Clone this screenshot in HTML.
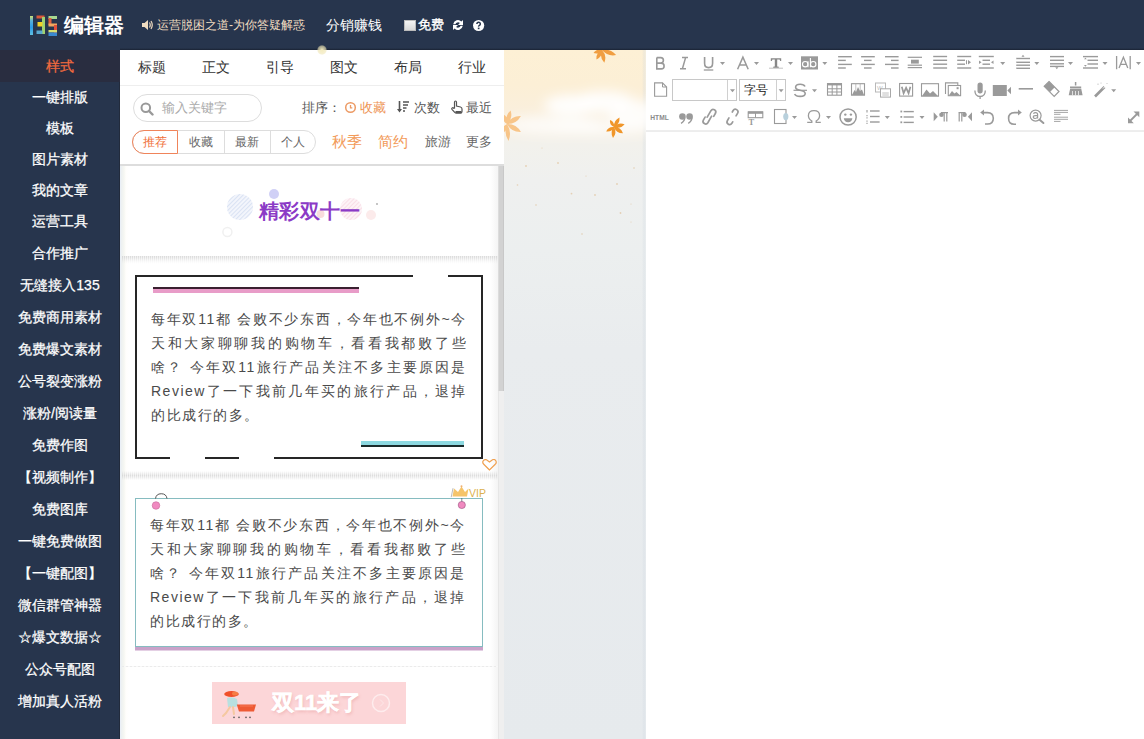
<!DOCTYPE html>
<html><head><meta charset="utf-8">
<style>
*{box-sizing:border-box;margin:0;padding:0}
html,body{width:1144px;height:739px;overflow:hidden;background:#fff;font-family:"Liberation Sans",sans-serif}
.abs{position:absolute}
#hdr{position:absolute;left:0;top:0;width:1144px;height:50px;background:#27354d}
#side{position:absolute;left:0;top:50px;width:120px;height:689px;background:#27354d}
#side div{position:absolute;left:0;width:120px;height:32px;line-height:32px;text-align:center;color:#fff;font-size:14px;white-space:nowrap;-webkit-text-stroke:.25px currentColor}
#side div.on{color:#f26b3e;background:#292d40}
#mid{position:absolute;left:120px;top:50px;width:384px;height:689px;background:#fff;overflow:hidden}
#bg{position:absolute;left:504px;top:50px;width:142px;height:689px;background:linear-gradient(#fdf0d5 0px,#fcefd6 35px,#faefdc 60px,#f7f1e6 80px,#f2f1ec 95px,#eff0ef 130px,#ecefef 200px,#e9ecee 300px,#e6eaed 689px);overflow:hidden}
#ed{position:absolute;left:646px;top:50px;width:498px;height:689px;background:#fff}
.tab{position:absolute;top:0;height:35px;line-height:35px;width:64px;text-align:center;font-size:14px;color:#333}
.t13{font-size:13px}
.sep{position:absolute;left:2px;width:376px;height:8px;background:repeating-linear-gradient(90deg,#d0d0d0 0 1px,#ececec 1px 2px);-webkit-mask:linear-gradient(rgba(0,0,0,.8) 0,rgba(0,0,0,.6) 2px,rgba(0,0,0,.3) 4px,rgba(0,0,0,.1) 6px,rgba(0,0,0,0) 8px)}
.sep2{position:absolute;left:2px;width:376px;height:1px;background:repeating-linear-gradient(90deg,#ebebeb 0 2px,#f8f8f8 2px 4px)}
.txt{position:absolute;left:151px;width:316px;font-size:14px;letter-spacing:1.5px;color:#4a4a4a;line-height:24px}
.txt div{text-align:justify;text-align-last:justify;height:24px;white-space:nowrap}
.txt div.l{text-align-last:left}
</style></head><body>
<div id="hdr">
<svg class="abs" style="left:0;top:0" width="62" height="40" viewBox="0 0 62 40">
<defs><linearGradient id="g1" x1="0" y1="0" x2="0" y2="1"><stop offset="0" stop-color="#cfe070"/><stop offset=".25" stop-color="#58b0d8"/><stop offset=".6" stop-color="#2a9ae8"/><stop offset="1" stop-color="#60c0e0"/></linearGradient></defs>
<rect x="30" y="16" width="3" height="19" fill="url(#g1)"/>
<rect x="36.5" y="15.5" width="8" height="3" fill="#d8583a"/>
<rect x="42" y="17" width="3" height="17" fill="#a0d070"/>
<rect x="37.5" y="22" width="5" height="4.5" fill="#f0d028"/>
<rect x="36.5" y="30.5" width="6" height="3.5" fill="#5aa8d0"/>
<rect x="48.5" y="16" width="8.5" height="3" fill="#a8d890"/>
<rect x="48.5" y="18" width="3" height="7" fill="#e0603e"/>
<rect x="48.5" y="23.5" width="8.5" height="3" fill="#f0a860"/>
<rect x="54" y="25" width="3" height="8" fill="#e0503c"/>
<rect x="48.5" y="30" width="8.5" height="2.5" fill="#d8e070"/>
<rect x="48.5" y="32.5" width="8.5" height="3.5" fill="#3a88d0"/>
</svg>
<div class="abs" style="left:64px;top:12px;font-size:20px;font-weight:bold;color:#fff;line-height:26px">编辑器</div>
<svg class="abs" style="left:142px;top:19px" width="12" height="12" viewBox="0 0 12 12"><path d="M0 4h2.5l3.5-3v10l-3.5-3h-2.5z" fill="#f0dcc0"/><path d="M7.5 3.5q1.5 2.5 0 5M9 2q2.5 4 0 8" stroke="#f0dcc0" stroke-width="1.2" fill="none"/></svg>
<div class="abs" style="left:157px;top:16px;font-size:12px;color:#f0dcc0;line-height:18px;white-space:nowrap">运营脱困之道-为你答疑解惑</div>
<div class="abs" style="left:326px;top:15px;font-size:14px;color:#fff;line-height:20px;white-space:nowrap">分销赚钱</div>
<div class="abs" style="left:404px;top:20px;width:12px;height:11px;background:linear-gradient(#f4f4f4,#d8d8d8);border:1px solid #bbb"></div>
<div class="abs" style="left:418px;top:16px;font-size:12.5px;color:#fff;line-height:18px;white-space:nowrap;-webkit-text-stroke:.35px #fff">免费</div>
<svg class="abs" style="left:452px;top:19px" width="12" height="12" viewBox="0 0 12 12"><path d="M1.2 5.2A4.8 4.8 0 0 1 9.4 2.6L11 1V6H6L7.9 4.1A2.8 2.8 0 0 0 3.4 5.2z" fill="#fff"/><path d="M10.8 6.8A4.8 4.8 0 0 1 2.6 9.4L1 11V6H6L4.1 7.9A2.8 2.8 0 0 0 8.6 6.8z" fill="#fff"/></svg>
<svg class="abs" style="left:472px;top:19px" width="13" height="13" viewBox="0 0 13 13"><circle cx="6.6" cy="6.5" r="5.6" fill="#fff"/><path d="M4.9 5.1q0-1.8 1.7-1.8t1.7 1.6q0 .9-.9 1.4t-.8 1.3" stroke="#27354d" stroke-width="1.5" fill="none"/><rect x="5.8" y="8.6" width="1.7" height="1.6" fill="#27354d"/></svg>
</div>
<div id="side"><div style="left:119px;top:0;width:1px;height:689px;background:#222b3c"></div>
<div class="on" style="top:0">样式</div>
<div style="top:31px">一键排版</div>
<div style="top:62px">模板</div>
<div style="top:93px">图片素材</div>
<div style="top:124px">我的文章</div>
<div style="top:155px">运营工具</div>
<div style="top:187px">合作推广</div>
<div style="top:219px">无缝接入135</div>
<div style="top:251px">免费商用素材</div>
<div style="top:283px">免费爆文素材</div>
<div style="top:315px">公号裂变涨粉</div>
<div style="top:347px">涨粉/阅读量</div>
<div style="top:379px">免费作图</div>
<div style="top:411px">【视频制作】</div>
<div style="top:443px">免费图库</div>
<div style="top:475px">一键免费做图</div>
<div style="top:507px">【一键配图】</div>
<div style="top:539px">微信群管神器</div>
<div style="top:571px">☆爆文数据☆</div>
<div style="top:603px">公众号配图</div>
<div style="top:635px">增加真人活粉</div>
</div>
<div id="mid">
<div class="tab" style="left:0">标题</div>
<div class="tab" style="left:64px">正文</div>
<div class="tab" style="left:128px">引导</div>
<div class="tab" style="left:192px">图文</div>
<div class="tab" style="left:256px">布局</div>
<div class="tab" style="left:320px">行业</div>
<div class="abs" style="left:0;top:35px;width:384px;height:1px;background:#eee"></div>
<div class="abs" style="left:13px;top:44px;width:129px;height:28px;border:1px solid #ddd;border-radius:14px"></div>
<svg class="abs" style="left:20px;top:52px" width="14" height="14" viewBox="0 0 14 14"><circle cx="5.8" cy="5.8" r="4.3" stroke="#999" stroke-width="2" fill="none"/><path d="M9 9l3.5 3.5" stroke="#999" stroke-width="2.4" stroke-linecap="round"/></svg>
<div class="abs" style="left:42px;top:49px;font-size:13px;color:#aaa;line-height:18px;white-space:nowrap">输入关键字</div>
<div class="abs" style="left:182px;top:49px;font-size:13px;color:#555;line-height:18px;white-space:nowrap">排序：</div>
<svg class="abs" style="left:224px;top:51px" width="13" height="13" viewBox="0 0 13 13"><circle cx="6.5" cy="6.5" r="4.8" stroke="#ec9a64" stroke-width="1.5" fill="none"/><path d="M6.5 4v2.8h1.8" stroke="#ec9a64" stroke-width="1.3" fill="none"/></svg>
<div class="abs" style="left:240px;top:49px;font-size:13px;color:#ee9456;line-height:18px;white-space:nowrap">收藏</div>
<svg class="abs" style="left:277px;top:50px" width="13" height="14" viewBox="0 0 13 14"><path d="M2.5 1v10" stroke="#555" stroke-width="1.6"/><path d="M0 9l2.5 3.5L5 9z" fill="#555"/><path d="M6 2h6M6 5h5M6 8h3.5M6 11h2" stroke="#555" stroke-width="1.5"/></svg>
<div class="abs" style="left:294px;top:49px;font-size:13px;color:#555;line-height:18px;white-space:nowrap">次数</div>
<svg class="abs" style="left:331px;top:50px" width="12" height="14" viewBox="0 0 12 14"><path d="M3.5 8V2.2q0-1.2 1-1.2t1 1.2V6l4 1q1.5.4 1.5 2v2.5q0 1-1 1.5H5q-.8 0-1.3-.6L1 9.3q-.6-.9.2-1.4t1.6.4z" stroke="#555" stroke-width="1.2" fill="none"/><rect x="4.5" y="11" width="6" height="2.5" fill="#555"/></svg>
<div class="abs" style="left:346px;top:49px;font-size:13px;color:#555;line-height:18px;white-space:nowrap">最近</div>
<div class="abs" style="left:12px;top:80px;width:184px;height:24px;border:1px solid #ddd;border-radius:12px"></div>
<div class="abs" style="left:12px;top:80px;width:46px;height:24px;border:1px solid #f0845a;border-radius:12px 0 0 12px;font-size:12px;color:#f0703a;line-height:22px;text-align:center">推荐</div>
<div class="abs" style="left:104px;top:80px;width:1px;height:24px;background:#ddd"></div>
<div class="abs" style="left:150px;top:80px;width:1px;height:24px;background:#ddd"></div>
<div class="abs" style="left:58px;top:80px;width:46px;height:24px;font-size:12px;color:#666;line-height:24px;text-align:center">收藏</div>
<div class="abs" style="left:104px;top:80px;width:46px;height:24px;font-size:12px;color:#666;line-height:24px;text-align:center">最新</div>
<div class="abs" style="left:150px;top:80px;width:46px;height:24px;font-size:12px;color:#666;line-height:24px;text-align:center">个人</div>
<div class="abs" style="left:212px;top:81px;font-size:15px;color:#f29a58;line-height:22px;white-space:nowrap">秋季</div>
<div class="abs" style="left:258px;top:81px;font-size:15px;color:#f29a58;line-height:22px;white-space:nowrap">简约</div>
<div class="abs" style="left:305px;top:83px;font-size:12.5px;color:#666;line-height:18px;white-space:nowrap">旅游</div>
<div class="abs" style="left:346px;top:83px;font-size:12.5px;color:#666;line-height:18px;white-space:nowrap">更多</div>
<div class="abs" style="left:0;top:114px;width:384px;height:2px;background:#ddd"></div>
<div class="abs" style="left:0;top:116px;width:9px;height:573px;background:linear-gradient(90deg,#e8eef8 0,#eef1f2 1.5px,#f6f7f2 4px,#fffefc 6px,rgba(255,255,255,0) 9px)"></div>
<div class="abs" style="left:370px;top:116px;width:8px;height:573px;background:linear-gradient(90deg,rgba(255,255,255,0),#f4f4f4)"></div>
<div class="abs" style="left:378px;top:116px;width:6px;height:573px;background:#efefef;border-left:1px solid #e6e6e6"></div>
<div class="abs" style="left:378px;top:116px;width:6px;height:225px;background:#d2d2d2;border-left:1px solid #dcdcdc;border-right:1px solid #c8c8c8"></div>
<div class="sep" style="top:206px"></div>
<div class="sep" style="top:421px;-webkit-mask:linear-gradient(rgba(0,0,0,0) 0,rgba(0,0,0,.3) 2px,rgba(0,0,0,.7) 4.5px,rgba(0,0,0,.4) 6.5px,rgba(0,0,0,0) 9px);height:9px"></div>
<div class="sep2" style="top:616px"></div>
<svg class="abs" style="left:95px;top:130px" width="180" height="60" viewBox="0 0 180 60">
<defs><pattern id="st1" width="3" height="3" patternUnits="userSpaceOnUse" patternTransform="rotate(45)"><rect width="1.1" height="3" fill="#c4d2ec"/></pattern>
<pattern id="st2" width="3" height="3" patternUnits="userSpaceOnUse" patternTransform="rotate(45)"><rect width="1.1" height="3" fill="#f4c8d6"/></pattern></defs>
<circle cx="25" cy="27" r="13" fill="#f4f6fc"/><circle cx="25" cy="27" r="13" fill="url(#st1)" opacity=".55"/>
<circle cx="59" cy="14" r="5" fill="#d0d0f6"/>
<circle cx="136" cy="29" r="11" fill="#fdf4f7"/><circle cx="136" cy="29" r="11" fill="url(#st2)" opacity=".5"/>
<circle cx="105.5" cy="34" r="4" fill="#f8dcdc"/>
<circle cx="156" cy="35" r="5" fill="#fcebeb"/>
<circle cx="12.4" cy="52" r="4.5" stroke="#f0f0f0" stroke-width="1.5" fill="none"/>
<circle cx="162" cy="24" r=".9" fill="#aaa"/>
</svg>
<div class="abs" style="left:139px;top:147px;font-size:19.5px;font-weight:bold;color:#8b3ac6;line-height:28px;white-space:nowrap;letter-spacing:0.3px">精彩双十一</div>
<div class="abs" style="left:15px;top:225px;width:348px;height:184px;border:2px solid #262626"></div>
<div class="abs" style="left:293px;top:225px;width:35px;height:2px;background:#fff"></div>
<div class="abs" style="left:50px;top:407px;width:35px;height:2px;background:#fff"></div>
<div class="abs" style="left:118.5px;top:407px;width:35px;height:2px;background:#fff"></div>
<div class="abs" style="left:33px;top:237px;width:206px;height:6px;background:#e89cc8;border-top:2px solid #3a2030"></div>
<div class="abs" style="left:241px;top:391px;width:103px;height:6px;background:#8cd8e0;border-bottom:2px solid #1a2a2a"></div>
<div class="txt" style="top:257px;left:31px">
<div>每年双11都 会败不少东西，今年也不例外~今</div>
<div>天和大家聊聊我的购物车，看看我都败了些</div>
<div>啥？ 今年双11旅行产品关注不多主要原因是</div>
<div>Review了一下我前几年买的旅行产品，退掉</div>
<div class="l">的比成行的多。</div>
</div>
<svg class="abs" style="left:362px;top:409px" width="15" height="12" viewBox="0 0 15 12"><path d="M7.5 11L2 5.5Q0 3.5 1.2 1.8T4.5.8L7.5 3 10.5.8Q12.6-.2 13.8 1.8T13 5.5z" stroke="#f0a050" stroke-width="1.2" fill="none"/></svg>
<div class="abs" style="left:15px;top:448px;width:348px;height:149px;border:1px solid #86bcc0;box-shadow:0 3.5px 0 #c9a2c9"></div>
<svg class="abs" style="left:30px;top:440px" width="20" height="20" viewBox="0 0 20 20"><path d="M5.5 8.6A5.8 5.6 0 0 1 17 8.6" stroke="#555" stroke-width="1" fill="none"/><circle cx="6" cy="15.5" r="3.8" fill="#f08ac0" stroke="#c86a9a" stroke-width=".6"/></svg>

<svg class="abs" style="left:336px;top:446px" width="12" height="14" viewBox="0 0 12 14"><path d="M5.8 2v4" stroke="#456" stroke-width=".7"/><circle cx="5.8" cy="9" r="3.6" fill="#f08ac0" stroke="#9a5080" stroke-width=".6"/></svg>
<svg class="abs" style="left:330px;top:434px" width="20" height="14" viewBox="0 0 20 14"><path d="M2.5 12.5L4 4.5 8 8 11.5 2.5 15 8 18.5 4.5 17 12.5z" fill="#f5c46a"/><circle cx="11.5" cy="2.2" r="1" fill="#f0b070"/><path d="M1.2 13.2L3 4.2" stroke="#777" stroke-width=".5"/></svg>
<div class="abs" style="left:349px;top:437px;font-size:10.5px;color:#dcb04e;line-height:12px">VIP</div>
<div class="txt" style="top:463px;left:30px">
<div>每年双11都 会败不少东西，今年也不例外~今</div>
<div>天和大家聊聊我的购物车，看看我都败了些</div>
<div>啥？ 今年双11旅行产品关注不多主要原因是</div>
<div>Review了一下我前几年买的旅行产品，退掉</div>
<div class="l">的比成行的多。</div>
</div>
<div class="abs" style="left:92px;top:632px;width:194px;height:42px;background:#fcd6d8"></div>
<div class="abs" style="left:152px;top:639px;font-size:22px;font-weight:bold;color:#fff;line-height:28px;white-space:nowrap;-webkit-text-stroke:.5px #fff;text-shadow:1px 2px 3px rgba(220,130,130,.35)">双11来了</div>
<svg class="abs" style="left:251px;top:643px" width="20" height="20" viewBox="0 0 20 20"><circle cx="10" cy="10" r="8.5" stroke="#fff" stroke-width="1.5" fill="none" opacity=".55"/><path d="M9 6.5l3.5 3.5-3.5 3.5" stroke="#fff" stroke-width="1" fill="none" opacity=".4"/></svg>
<svg class="abs" style="left:100px;top:638px" width="40" height="34" viewBox="0 0 40 34"><ellipse cx="11.5" cy="6" rx="7.3" ry="3" fill="#f0502a"/><ellipse cx="15" cy="5.5" rx="3" ry="2" fill="#f89050" opacity=".7"/><path d="M7 10Q12 8 17 11L18 18Q13 20 8 19Z" fill="#b8e0e0"/><path d="M10 19L6 25 3 28M13 19L14 26" stroke="#f5c8a0" stroke-width="2" fill="none" stroke-linecap="round"/><path d="M16.8 16.4H36L34 23.5H19Z" fill="#ee5a34"/><path d="M20 18H33" stroke="#f88060" stroke-width=".8"/><circle cx="14" cy="29.4" r=".8" fill="#555"/><circle cx="19" cy="29.4" r=".8" fill="#555"/><circle cx="26" cy="29.4" r=".8" fill="#555"/><circle cx="30" cy="29.4" r=".8" fill="#555"/></svg>
</div>
<div class="abs" style="z-index:5;left:120px;top:48px;width:1024px;height:2px;background:linear-gradient(rgba(20,26,40,0),rgba(20,26,40,.7))"></div>
<div class="abs" style="z-index:5;left:317px;top:45px;width:10px;height:10px;border-radius:50%;background:radial-gradient(#f4ecc0,rgba(240,230,180,.6) 55%,rgba(240,230,180,0) 75%)"></div>
<div id="bg"><div class="abs" style="left:138px;top:0;width:4px;height:689px;background:linear-gradient(90deg,rgba(200,210,220,0),rgba(200,210,220,.25) 50%,rgba(230,236,240,.4))"></div><!--BG--><svg class="abs" style="left:0;top:0" width="142" height="300" viewBox="0 0 142 300"><defs><filter id="blr" x="-50%" y="-50%" width="200%" height="200%"><feGaussianBlur stdDeviation="6"/></filter><filter id="blr2" x="-20%" y="-20%" width="140%" height="140%"><feGaussianBlur stdDeviation=".5"/></filter></defs><g filter="url(#blr)" fill="#fff"><ellipse cx="68" cy="55" rx="28" ry="10" opacity=".95"/><ellipse cx="100" cy="52" rx="30" ry="11" opacity=".9"/><ellipse cx="130" cy="64" rx="25" ry="14" opacity=".85"/><ellipse cx="50" cy="75" rx="50" ry="9" opacity=".7"/><ellipse cx="100" cy="78" rx="50" ry="7" opacity=".6"/></g><path d="M98.0 0.0Q91.8 2.8 92.5 9.5Q98.7 6.8 98.0 0.0ZM98.0 0.0Q95.0 7.1 100.3 12.8Q103.3 5.7 98.0 0.0ZM98.0 0.0Q103.5 6.8 112.1 5.1Q106.6 -1.7 98.0 0.0ZM98.0 0.0Q92.6 -1.7 89.5 3.1Q95.0 4.8 98.0 0.0ZM98.0 0.0Q104.1 2.0 107.4 -3.4Q101.3 -5.5 98.0 0.0Z" fill="#f09a3a" opacity="0.95" filter="url(#blr2)"/><path d="M3.0 74.0Q9.2 68.4 6.6 60.5Q0.5 66.1 3.0 74.0ZM3.0 74.0Q12.4 74.3 16.9 66.0Q7.4 65.7 3.0 74.0ZM3.0 74.0Q7.4 82.3 16.9 82.0Q12.4 73.7 3.0 74.0ZM3.0 74.0Q-0.7 82.9 4.5 90.9Q8.2 82.1 3.0 74.0ZM3.0 74.0Q5.0 67.9 -0.4 64.6Q-2.5 70.7 3.0 74.0ZM3.0 74.0Q-3.5 77.2 -3.0 84.4Q3.5 81.2 3.0 74.0Z" fill="#f8bd78" opacity="0.85" filter="url(#blr2)"/><path d="M110.0 77.0Q116.0 74.1 115.5 67.5Q109.5 70.3 110.0 77.0ZM110.0 77.0Q116.3 79.4 120.6 74.2Q114.3 71.7 110.0 77.0ZM110.0 77.0Q112.2 83.4 119.0 83.3Q116.8 76.9 110.0 77.0ZM110.0 77.0Q105.7 82.1 109.0 88.0Q113.3 82.8 110.0 77.0ZM110.0 77.0Q104.4 76.2 102.2 81.5Q107.9 82.3 110.0 77.0ZM110.0 77.0Q110.8 71.9 106.0 70.1Q105.2 75.1 110.0 77.0Z" fill="#f0962a" opacity="1" filter="url(#blr2)"/><circle cx="38" cy="98" r="0.6" fill="#d8a060" opacity=".4"/><circle cx="54" cy="113" r="0.9" fill="#d8a060" opacity=".4"/><circle cx="22" cy="116" r="0.9" fill="#d8a060" opacity=".4"/><circle cx="82" cy="126" r="0.6" fill="#d8a060" opacity=".4"/><circle cx="130" cy="118" r="0.8" fill="#d8a060" opacity=".4"/><circle cx="113" cy="134" r="0.9" fill="#d8a060" opacity=".4"/><circle cx="13.5" cy="135" r="0.8" fill="#d8a060" opacity=".4"/><circle cx="67.5" cy="143.6" r="0.9" fill="#d8a060" opacity=".4"/><circle cx="91" cy="145" r="0.9" fill="#d8a060" opacity=".4"/><circle cx="127" cy="154" r="0.6" fill="#d8a060" opacity=".4"/><circle cx="116.5" cy="163" r="0.9" fill="#d8a060" opacity=".4"/><circle cx="127" cy="172" r="0.6" fill="#d8a060" opacity=".4"/><circle cx="32" cy="155" r="0.8" fill="#d8a060" opacity=".4"/><circle cx="78" cy="184" r="0.8" fill="#d8a060" opacity=".4"/></svg><!--/BG--></div>
<div id="ed"></div>
<!--TB--><svg class="abs" style="left:0;top:0" width="1144" height="140" viewBox="0 0 1144 140"><path d="M656.8 57.6V68.9H661.3Q664.1 68.9 664.1 65.9Q664.1 63.1 661 63.1H656.8M656.8 57.6H660.7Q663.4 57.6 663.4 60.3Q663.4 63.1 660.7 63.1" stroke="#9a9a9a" stroke-width="1.6" fill="none"/><path d="M682 57.6H688M680 68.7H686M685.6 57.6L682.4 68.7" stroke="#9a9a9a" stroke-width="1.5" fill="none"/><path d="M704.6 57V63.2Q704.6 67.6 708.6 67.6T712.6 63.2V57" stroke="#9a9a9a" stroke-width="1.6" fill="none"/><path d="M703.8 70H713.3" stroke="#9a9a9a" stroke-width="1.3"/><path d="M720 62h5l-2.5 3z" fill="#9a9a9a"/><path d="M737.6 69.2L742.9 57.2L748.2 69.2M739.6 65H746.2" stroke="#9a9a9a" stroke-width="1.5" fill="none"/><path d="M754 62h5l-2.5 3z" fill="#9a9a9a"/><path d="M770.8 58.2H781.2V61H780.2L779.6 59.6H777.2V66.4L778.8 66.8V67.8H773.2V66.8L774.8 66.4V59.6H772.4L771.8 61H770.8Z" fill="#888"/><path d="M769 68.2H783" stroke="#9a9a9a" stroke-width="0.6"/><path d="M788 62h5l-2.5 3z" fill="#9a9a9a"/><rect x="801" y="56.3" width="17" height="13.2" fill="#9a9a9a"/><circle cx="805.2" cy="64.2" r="2.7" stroke="#fff" stroke-width="1.1" fill="none"/><path d="M808 61.2V67.2M810.4 58V67.2" stroke="#fff" stroke-width="1.1"/><circle cx="813.2" cy="64.2" r="2.7" stroke="#fff" stroke-width="1.1" fill="none"/><path d="M822.3 62h5l-2.5 3z" fill="#9a9a9a"/><path d="M838.1 56.7H851.8" stroke="#9a9a9a" stroke-width="1.4"/><path d="M861.1 56.7H874.8" stroke="#9a9a9a" stroke-width="1.4"/><path d="M885 56.7H898.6" stroke="#9a9a9a" stroke-width="1.4"/><path d="M838.1 60.4H845.8" stroke="#9a9a9a" stroke-width="1.4"/><path d="M864 60.4H871.6" stroke="#9a9a9a" stroke-width="1.4"/><path d="M891 60.4H898.6" stroke="#9a9a9a" stroke-width="1.4"/><path d="M838.1 64.4H851.8" stroke="#9a9a9a" stroke-width="1.4"/><path d="M861.1 64.4H874.8" stroke="#9a9a9a" stroke-width="1.4"/><path d="M885 64.4H898.6" stroke="#9a9a9a" stroke-width="1.4"/><path d="M838.1 68H845.8" stroke="#9a9a9a" stroke-width="1.4"/><path d="M864 68H871.6" stroke="#9a9a9a" stroke-width="1.4"/><path d="M891 68H898.6" stroke="#9a9a9a" stroke-width="1.4"/><path d="M907.7 57.3H922" stroke="#9a9a9a" stroke-width="1.2"/><rect x="911" y="59.7" width="7.8" height="3.9" fill="#9a9a9a"/><path d="M907.7 65.2H922" stroke="#9a9a9a" stroke-width="1.2"/><path d="M907.7 67.6H922" stroke="#9a9a9a" stroke-width="1.2"/><path d="M933.2 56.5H947.1" stroke="#9a9a9a" stroke-width="1.4"/><path d="M933.2 60.3H947.1" stroke="#9a9a9a" stroke-width="1.4"/><path d="M933.2 64.2H947.1" stroke="#9a9a9a" stroke-width="1.4"/><path d="M933.2 68H947.1" stroke="#9a9a9a" stroke-width="1.4"/><path d="M957.2 56.5H971.2" stroke="#9a9a9a" stroke-width="1.4"/><path d="M957.2 60.3H965" stroke="#9a9a9a" stroke-width="1.4"/><path d="M957.2 64.2H965" stroke="#9a9a9a" stroke-width="1.4"/><path d="M957.2 68H971.2" stroke="#9a9a9a" stroke-width="1.4"/><path d="M966.5 60.2v4" stroke="#9a9a9a" stroke-width="1"/><path d="M968 60l3 2.2-3 2.2z" fill="#9a9a9a"/><path d="M978.8 56.5H993.8" stroke="#9a9a9a" stroke-width="1.4"/><path d="M982.5 60.3H990" stroke="#9a9a9a" stroke-width="1.4"/><path d="M982.5 64.2H990" stroke="#9a9a9a" stroke-width="1.4"/><path d="M978.8 68H993.8" stroke="#9a9a9a" stroke-width="1.4"/><path d="M979 60.5l2.5 1.8-2.5 1.8z" fill="#9a9a9a"/><path d="M993.5 60.5l-2.5 1.8 2.5 1.8z" fill="#9a9a9a"/><path d="M1000.2 62h5l-2.5 3z" fill="#9a9a9a"/><path d="M1023 54.8l-1.5 2h3z" fill="#9a9a9a"/><path d="M1016.3 58.5H1030" stroke="#9a9a9a" stroke-width="1.4"/><path d="M1016.3 62.3H1030" stroke="#9a9a9a" stroke-width="1.4"/><path d="M1016.3 65.2H1030" stroke="#9a9a9a" stroke-width="1.4"/><path d="M1016.3 68.3H1030" stroke="#9a9a9a" stroke-width="1.4"/><path d="M1034.3 62h5l-2.5 3z" fill="#9a9a9a"/><path d="M1050 56.6H1064" stroke="#9a9a9a" stroke-width="1.4"/><path d="M1050 60.3H1064" stroke="#9a9a9a" stroke-width="1.4"/><path d="M1050 63.8H1064" stroke="#9a9a9a" stroke-width="1.4"/><path d="M1050 66.4H1064" stroke="#9a9a9a" stroke-width="1.4"/><path d="M1055.3 67.2h3l-1.5 2z" fill="#9a9a9a"/><path d="M1068 62h5l-2.5 3z" fill="#9a9a9a"/><path d="M1083 56.6H1098" stroke="#9a9a9a" stroke-width="1.4"/><path d="M1087.5 60.3H1098" stroke="#9a9a9a" stroke-width="1.4"/><path d="M1087.5 64H1098" stroke="#9a9a9a" stroke-width="1.4"/><path d="M1083 68H1098" stroke="#9a9a9a" stroke-width="1.4"/><path d="M1084 59.3l1.4-1.6 1.4 1.6zM1084 65.1l1.4 1.6 1.4-1.6z" fill="#9a9a9a"/><path d="M1102.5 62h5l-2.5 3z" fill="#9a9a9a"/><path d="M1116.6 56V69.3M1130.2 56V69.3" stroke="#9a9a9a" stroke-width="1.3"/><path d="M1119 68L1123.4 57.3L1127.8 68M1120.6 64.3H1126.2" stroke="#9a9a9a" stroke-width="1.3" fill="none"/><path d="M1136 62h5l-2.5 3z" fill="#9a9a9a"/><path d="M654.6 82.9H662.5L666.6 87V96.2H654.6Z" stroke="#9a9a9a" stroke-width="1.1" fill="none"/><path d="M662.5 82.9V87H666.6" stroke="#9a9a9a" stroke-width="1" fill="none"/><rect x="672.5" y="79.5" width="64" height="21" fill="#fff" stroke="#c8c8c8" stroke-width="1"/><path d="M727.5 80V100" stroke="#d0d0d0"/><path d="M730 89.2h5l-2.5 3z" fill="#9a9a9a"/><rect x="739.5" y="79.5" width="46" height="21" fill="#fff" stroke="#c8c8c8" stroke-width="1"/><path d="M776.5 80V100" stroke="#d0d0d0"/><path d="M778.6 89.2h5l-2.5 3z" fill="#9a9a9a"/><path d="M805 86.5Q804 84.2 800.2 84.2Q795.6 84.2 795.6 87.3Q795.6 89.5 800 90.3Q805.2 91.2 805.2 93.6Q805.2 96.4 800.2 96.4Q795.8 96.4 794.6 94" stroke="#9a9a9a" stroke-width="1.6" fill="none"/><path d="M793.5 90.3H807" stroke="#9a9a9a" stroke-width="1.2"/><path d="M812 89.2h5l-2.5 3z" fill="#9a9a9a"/><rect x="827.5" y="83.7" width="14" height="11.5" stroke="#9a9a9a" stroke-width="1.1" fill="none"/><rect x="827" y="83.2" width="15" height="2.2" fill="#9a9a9a"/><path d="M832.2 84V95M836.9 84V95M828 88.8H841M828 92H841" stroke="#9a9a9a" stroke-width="1"/><rect x="851.5" y="83.7" width="13" height="11.5" stroke="#9a9a9a" stroke-width="1.1" fill="none"/><path d="M855.8 84V95M860.2 84V95" stroke="#9a9a9a" stroke-width=".6"/><path d="M852 95L854.5 90L856 92L858 87L860 91L862 89.5L864 95Z" fill="#9a9a9a"/><rect x="875.5" y="83" width="10" height="9" stroke="#b8b8b8" stroke-width="1" fill="#fff"/><text x="877" y="90.2" font-family="Liberation Sans" font-size="6" fill="#c0c0c0">W</text><rect x="880.5" y="88.8" width="10" height="8.3" stroke="#a8a8a8" stroke-width="1" fill="#fff"/><path d="M882.3 93h6.5M882.3 95h6.5" stroke="#c0c0c0" stroke-width="1"/><rect x="899.6" y="83.5" width="13" height="12.6" stroke="#9a9a9a" stroke-width="1.1" fill="none"/><path d="M901.8 86.8L903.6 93.2L906.1 87.8L908.6 93.2L910.4 86.8" stroke="#9a9a9a" stroke-width="1.7" fill="none"/><rect x="921.5" y="83.7" width="17" height="12.5" stroke="#9a9a9a" stroke-width="1.1" fill="none"/><path d="M922 96L926.5 89.5L930 93.5L933 91L938 96Z" fill="#9a9a9a"/><path d="M945.5 94V82.9H957.8V85" stroke="#9a9a9a" stroke-width="1.1" fill="none"/><rect x="948.3" y="85.5" width="12.3" height="10.2" stroke="#9a9a9a" stroke-width="1.1" fill="#fff"/><path d="M948.8 95.5L952 91L954.5 93.6L956.5 92L960.2 95.5Z" fill="#9a9a9a"/><rect x="956.6" y="87.2" width="2" height="2" fill="#9a9a9a"/><rect x="977.5" y="82.4" width="5.2" height="11" rx="2.6" fill="#9a9a9a"/><path d="M974.9 90.5Q974.9 96.5 980.1 96.5T985.3 90.5M980.1 96.5V99" stroke="#9a9a9a" stroke-width="1.3" fill="none"/><rect x="992.8" y="85" width="14" height="11" fill="#9a9a9a"/><path d="M1007.3 90.5L1011 86.8V94.2Z" fill="#9a9a9a"/><path d="M1018.7 88.8H1033" stroke="#9a9a9a" stroke-width="1.6"/><path d="M1049 81.5L1059 91.5L1054.2 96.3L1044.2 86.3Z" stroke="#9a9a9a" stroke-width="1.2" fill="none"/><path d="M1049 81.5L1054.8 87.3L1050 92.1L1044.2 86.3Z" fill="#9a9a9a"/><path d="M1075.6 82V85.5M1070 87.2H1081.2" stroke="#9a9a9a" stroke-width="1.5"/><path d="M1070.2 88.5H1081.2L1082.6 95.2H1068.7Z" fill="#9a9a9a"/><path d="M1072.5 91V95.2M1075.5 91V95.2M1078.5 91V95.2" stroke="#fff" stroke-width=".7"/><path d="M1095 96.5L1104.5 87" stroke="#9a9a9a" stroke-width="2.6"/><path d="M1103 88.5L1105.5 86" stroke="#fff" stroke-width="1"/><path d="M1098 83.5v1.5M1101 82.6v1M1106.5 84l1 -1" stroke="#bbb" stroke-width=".8"/><path d="M1111.2 89.2h5l-2.5 3z" fill="#9a9a9a"/><text x="650.3" y="119.6" font-family="Liberation Sans" font-size="7.2" font-weight="bold" fill="#8a8a8a" textLength="18.4" lengthAdjust="spacingAndGlyphs">HTML</text><circle cx="682.4" cy="116.5" r="3.3" fill="#9a9a9a"/><path d="M684.8 117.5Q684.5 121.5 681 123.3" stroke="#9a9a9a" stroke-width="1.4" fill="none"/><circle cx="689.6" cy="116.5" r="3.3" fill="#9a9a9a"/><path d="M692 117.5Q691.7 121.5 688.2 123.3" stroke="#9a9a9a" stroke-width="1.4" fill="none"/><path d="M713.70 116.33L715.45 113.30A2.6 2.6 0 0 0 710.95 110.70L707.20 117.20M705.10 117.07L703.35 120.10A2.6 2.6 0 0 0 707.85 122.70L711.60 116.20" stroke="#9a9a9a" stroke-width="1.7" fill="none" stroke-linecap="round"/><path d="M736.05 115.87L737.65 113.10A2.6 2.6 0 0 0 733.15 110.50L732.3 112M728.95 117.93L727.35 120.70A2.6 2.6 0 0 0 731.85 123.30L732.7 121.8" stroke="#9a9a9a" stroke-width="1.7" fill="none" stroke-linecap="round"/><rect x="748.2" y="111.9" width="14.6" height="5.8" stroke="#9a9a9a" stroke-width="1.1" fill="none"/><rect x="748" y="111.4" width="15" height="2.4" fill="#9a9a9a"/><path d="M755.5 112V117.6" stroke="#9a9a9a" stroke-width="1"/><text x="748.6" y="125.2" font-family="Liberation Serif" font-size="8.5" font-weight="bold" fill="#9a9a9a">T</text><rect x="774.5" y="109.5" width="11.5" height="14" stroke="#9a9a9a" stroke-width="1.1" fill="#fff"/><ellipse cx="785.8" cy="116.6" rx="2.6" ry="3.6" fill="#b8d0dc"/><path d="M792 116h5l-2.5 3z" fill="#9a9a9a"/><path d="M807.2 122.4H811.8V121Q808.4 119.2 808.4 115.6Q808.4 110.6 814 110.6T819.6 115.6Q819.6 119.2 816.2 121V122.4H820.8" stroke="#9a9a9a" stroke-width="1.3" fill="none"/><path d="M826 116h5l-2.5 3z" fill="#9a9a9a"/><circle cx="848.1" cy="117" r="8.1" stroke="#9a9a9a" stroke-width="1.5" fill="none"/><circle cx="845.3" cy="114.6" r="1.2" fill="#9a9a9a"/><circle cx="850.9" cy="114.6" r="1.2" fill="#9a9a9a"/><path d="M843.8 118.2H852.4Q851.8 122.2 848.1 122.2T843.8 118.2Z" fill="#9a9a9a"/><path d="M870 111H879.6" stroke="#9a9a9a" stroke-width="1.4"/><path d="M870 116.5H879.6" stroke="#9a9a9a" stroke-width="1.4"/><path d="M870 122H879.6" stroke="#9a9a9a" stroke-width="1.4"/><path d="M867 110v2.4M867 115v1.2M867 117.2v1.2M867 120.6v1.2M867 122.8v1.2" stroke="#9a9a9a" stroke-width="1.1"/><path d="M884.8 116h5l-2.5 3z" fill="#9a9a9a"/><rect x="900.4" y="110.6" width="1.8" height="1.8" fill="#9a9a9a"/><path d="M903.6 111.6H913.8" stroke="#9a9a9a" stroke-width="1.4"/><rect x="900.4" y="116" width="1.8" height="1.8" fill="#9a9a9a"/><path d="M903.6 117H913.8" stroke="#9a9a9a" stroke-width="1.4"/><rect x="900.4" y="121.4" width="1.8" height="1.8" fill="#9a9a9a"/><path d="M903.6 122.4H913.8" stroke="#9a9a9a" stroke-width="1.4"/><path d="M919.5 116h5l-2.5 3z" fill="#9a9a9a"/><path d="M933.7 112.2V121.2L937.8 116.7Z" fill="#9a9a9a"/><path d="M941 112.6H948M944.2 112.6V121.4M946.8 112.6V121.4" stroke="#9a9a9a" stroke-width="1.2"/><ellipse cx="941.5" cy="114.8" rx="2.3" ry="2.2" fill="#9a9a9a"/><path d="M958.5 112.6H965.5M959.2 112.6V121.4M961.8 112.6V121.4" stroke="#9a9a9a" stroke-width="1.2"/><ellipse cx="964.5" cy="114.8" rx="2.3" ry="2.2" fill="#9a9a9a"/><path d="M972 112.2V121.2L967.9 116.7Z" fill="#9a9a9a"/><path d="M982.5 112.6H987.5Q993.3 112.6 993.3 118.3T987.5 124H985" stroke="#9a9a9a" stroke-width="1.6" fill="none"/><path d="M980.2 112.6L984 109.6V115.6Z" fill="#9a9a9a"/><path d="M1019.2 112.6H1014.5Q1008.6 112.6 1008.6 118.5T1014.5 124.2H1016" stroke="#9a9a9a" stroke-width="1.6" fill="none"/><path d="M1021.8 112.6L1018 109.6V115.6Z" fill="#9a9a9a"/><circle cx="1035.6" cy="115.6" r="5.5" stroke="#9a9a9a" stroke-width="1.2" fill="none"/><path d="M1039.6 119.8L1043.4 123" stroke="#9a9a9a" stroke-width="2" stroke-linecap="round"/><path d="M1033.4 113.6Q1034.2 112.6 1035.6 112.6Q1037.6 112.6 1037.6 114.6V118.4M1037.6 115.6H1035.2Q1033.2 115.6 1033.2 117.1Q1033.2 118.5 1035 118.5Q1036.8 118.5 1037.6 117" stroke="#9a9a9a" stroke-width="1.2" fill="none"/><path d="M1054 110.4H1068" stroke="#9a9a9a" stroke-width="0.9"/><path d="M1054 112.4H1068" stroke="#9a9a9a" stroke-width="0.9"/><path d="M1054 114.3H1060.5" stroke="#9a9a9a" stroke-width="0.9"/><path d="M1054 117.2H1068" stroke="#9a9a9a" stroke-width="0.9"/><path d="M1054 119.3H1068" stroke="#9a9a9a" stroke-width="0.9"/><path d="M1054 121.4H1060.5" stroke="#9a9a9a" stroke-width="0.9"/><path d="M1129.5 121.5L1138 113" stroke="#9a9a9a" stroke-width="1.8"/><path d="M1128 123.2V117.4L1133.8 123.2Z M1139.3 111.5V117.3L1133.5 111.5Z" fill="#9a9a9a"/><path d="M646 131H1144" stroke="#dcdcdc" stroke-width="1"/></svg><div class="abs" style="left:744px;top:81px;font-size:12px;color:#111;line-height:18px;white-space:nowrap">字号</div><!--/TB-->
</body></html>
